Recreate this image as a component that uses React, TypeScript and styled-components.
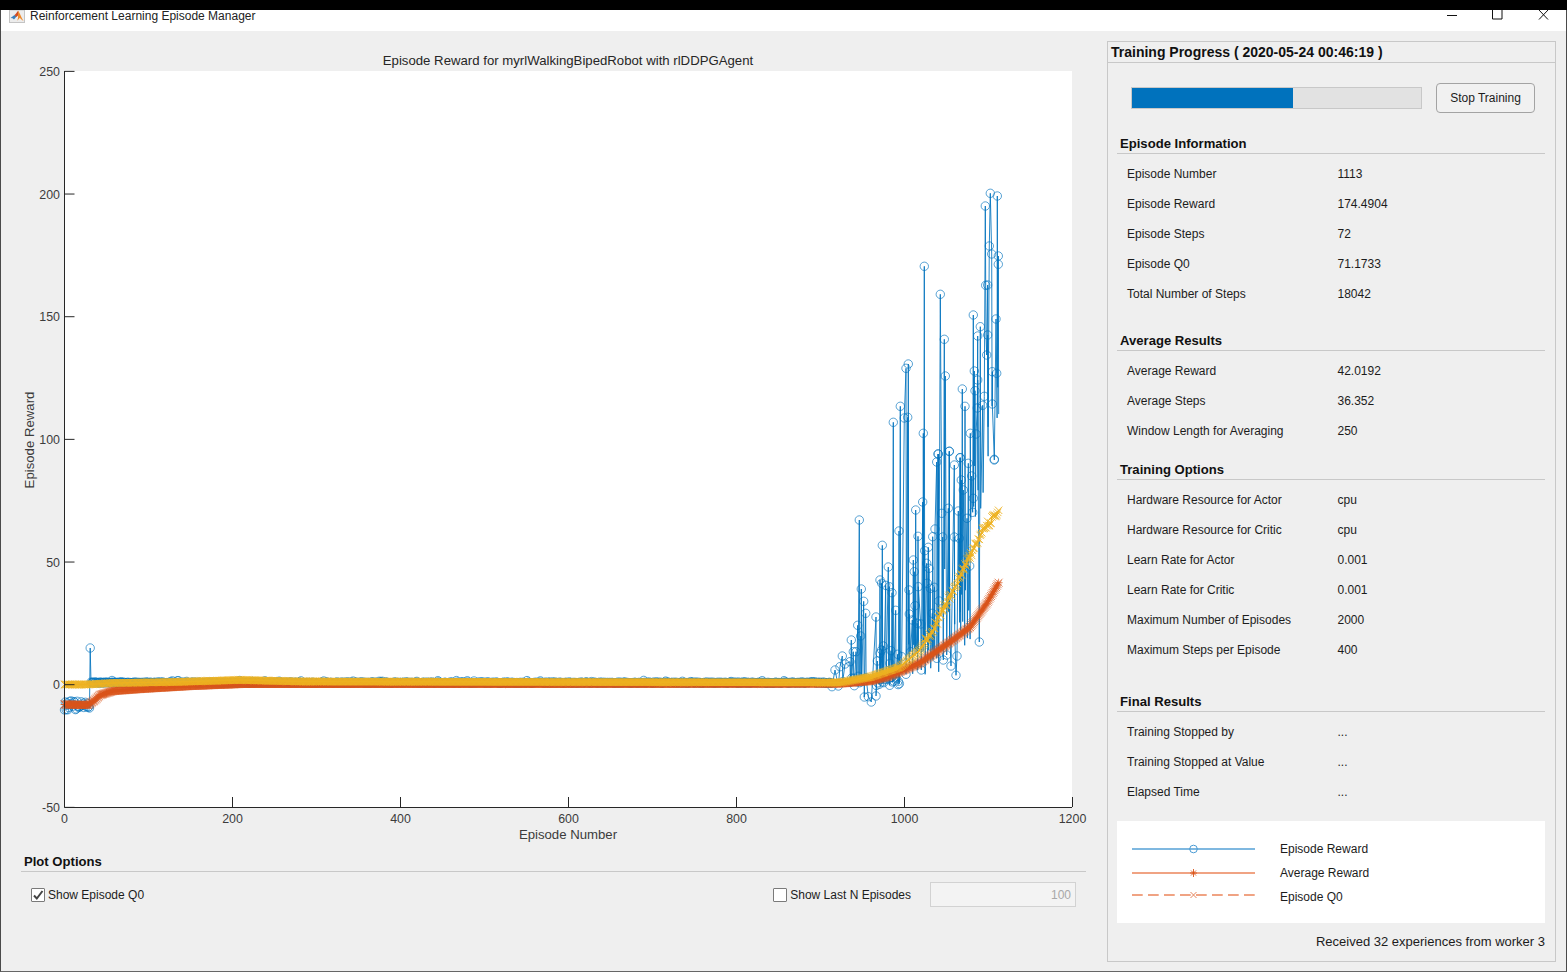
import React from 'react';
import styled, { createGlobalStyle } from 'styled-components';

// ===== Plot data (page pixel coordinates, the svg viewBox uses the same ones) =====
type Pt = [number, number];

const PX_PER_EPISODE = 0.84;
const X0 = 64.5;
const EPISODES = 1113;

let seed = 17;
const rnd = () => {
  seed = (seed * 16807) % 2147483647;
  return seed / 2147483647;
};

const upperPeaks: Pt[] = [
  [511, 40], [532, 48], [496, 78], [508, 198], [515, 222], [535, 228], [535, 253], [313, 259], [361, 343],
  [373, 478], [376, 588], [427, 627], [435, 679], [241, 679], [265, 552], [258, 565], [263, 712], [253, 714],
  [220, 727], [310, 760], [451, 760], [468, 762], [354, 822], [388, 814], [420, 833], [523, 838], [460, 405],
  [481, 440], [503, 315], [497, 316], [528, 417], [473, 468], [503, 465], [500, 525], [463, 573], [517, 575],
  [530, 580], [473, 600], [465, 632], [493, 649], [488, 676], [517, 672], [472, 684],
];
const lowerPeaks: Pt[] = [
  [523, 60], [118, 240], [187, 316], [205, 381], [180, 420], [185, 430], [197, 436], [208, 440], [216, 458],
  [124, 447], [131, 484], [137, 520], [113, 556], [122, 588], [94, 600], [67, 648], [45, 690], [168, 531],
  [227, 511], [237, 273], [287, 210], [308, 186], [294, 289], [267, 450], [280, 360], [283, 395], [295, 440],
  [285, 497], [268, 522], [277, 540], [292, 550], [302, 552], [272, 635], [304, 690], [235, 724], [350, 66],
  [355, 42], [385, 205], [415, 213], [388, 34], [421, 53], [403, 75], [445, 70], [455, 108], [424, 120],
  [430, 150], [460, 175], [458, 217], [441, 235], [345, 267], [338, 290], [368, 291], [403, 291], [418, 295],
  [314, 332], [325, 322], [320, 370], [327, 385], [322, 430], [343, 442], [331, 445], [357, 483], [337, 520],
  [365, 220], [433, 360], [449, 378], [478, 606], [411, 648], [408, 706], [393, 678], [370, 660], [350, 655],
  [380, 645], [133, 771], [154, 786], [168, 768], [145, 770], [178, 733], [172, 663], [185, 630], [190, 618],
  [213, 632], [233, 643], [245, 650], [258, 703], [210, 670], [180, 640], [100, 635], [108, 635], [60, 680],
  [75, 672], [90, 665], [36, 740], [55, 738], [103, 737],
];

const peaks: Pt[] = [
  ...upperPeaks.map(([x, y]): Pt => [820 + x / 3, 180 + y / 3]),
  ...lowerPeaks.map(([x, y]): Pt => [820 + x / 3, 440 + y / 3]),
].sort((a, b) => a[0] - b[0]);

// the spikes drop back to a floor that climbs towards the end of the run
const floorAt = (x: number) => {
  if (x >= 983) return 330 + rnd() * 130;
  if (x >= 970) return 460 + rnd() * 60;
  if (x >= 940) return 560 + rnd() * 90;
  if (x >= 900) return 640 + rnd() * 35;
  return 676 + rnd() * 10;
};

const buildReward = () => {
  const line: Pt[] = [];
  const marks: Pt[] = [];
  const add = (p: Pt) => {
    line.push(p);
    marks.push(p);
  };
  for (let ep = 0; ep < 30; ep++) add([X0 + ep * PX_PER_EPISODE, 701 + rnd() * 9]);
  add([89.5, 708]);
  add([90.2, 648]);
  for (let x = 91; x < 832; x += PX_PER_EPISODE) add([x, 682 + rnd() * 1.2 - (rnd() > 0.96 ? 1.6 : 0)]);
  peaks.forEach(([x, y]) => {
    add([x, y]);
    const low = floorAt(x);
    if (y < low - 20 && (x < 900 || rnd() > 0.3)) {
      line.push([x + 0.4, low]);
      if (x < 900) marks.push([x + 0.4, low]);
    }
  });
  return { line, marks };
};

const interpolate = (knots: Pt[]): Pt[] => {
  const pts: Pt[] = [];
  let k = 0;
  for (let ep = 0; ep < EPISODES; ep++) {
    const x = X0 + ep * PX_PER_EPISODE;
    while (k < knots.length - 2 && x > knots[k + 1][0]) k++;
    const [x1, y1] = knots[k];
    const [x2, y2] = knots[k + 1];
    pts.push([x, y1 + ((y2 - y1) * (x - x1)) / (x2 - x1)]);
  }
  return pts;
};

const averageReward = interpolate([
  [64, 704.5], [88, 705], [95, 700], [100, 695], [113, 691], [140, 689], [190, 686], [240, 684], [300, 684], [840, 683.5],
  [870, 681], [887, 677], [920, 663], [953, 640], [970, 627], [987, 603], [999, 582],
]);
const episodeQ0 = interpolate([
  [64, 684.5], [88, 684.5], [113, 683], [173, 682], [240, 680], [300, 681.5], [840, 682.5],
  [870, 677], [900, 667], [920, 650], [933, 630], [953, 590], [970, 557], [983, 530], [998, 512],
]).map(([x, y]): Pt => [x, x > 925 ? y + (rnd() - 0.5) * 6 : y]);

const linePath = (pts: Pt[]) => pts.map(([x, y], i) => `${i ? 'L' : 'M'}${x.toFixed(1)} ${y.toFixed(1)}`).join('');
const circlePath = (pts: Pt[], r: number) =>
  pts.map(([x, y]) => `M${(x - r).toFixed(1)} ${y.toFixed(1)}a${r} ${r} 0 1 0 ${2 * r} 0a${r} ${r} 0 1 0 ${-2 * r} 0`).join('');
const crossPath = (pts: Pt[], r: number) =>
  pts.map(([x, y]) => `M${(x - r).toFixed(1)} ${(y - r).toFixed(1)}l${2 * r} ${2 * r}m${-2 * r} 0l${2 * r} ${-2 * r}`).join('');
const starPath = (pts: Pt[], r: number) =>
  pts.map(([x, y]) => `${crossPath([[x, y]], r)}M${x.toFixed(1)} ${(y - r).toFixed(1)}v${2 * r}M${(x - r).toFixed(1)} ${y.toFixed(1)}h${2 * r}`).join('');

const reward = buildReward();

const xTicks = [0, 200, 400, 600, 800, 1000, 1200];
const yTicks = [250, 200, 150, 100, 50, 0, -50];
const xPos = (v: number) => X0 + v * 0.84;
const yPos = (v: number) => 684.7 - v * 2.4533;

// ===== Panel data =====
const episodeInfo = [
  ['Episode Number', '1113'],
  ['Episode Reward', '174.4904'],
  ['Episode Steps', '72'],
  ['Episode Q0', '71.1733'],
  ['Total Number of Steps', '18042'],
];
const averageResults = [
  ['Average Reward', '42.0192'],
  ['Average Steps', '36.352'],
  ['Window Length for Averaging', '250'],
];
const trainingOptions = [
  ['Hardware Resource for Actor', 'cpu'],
  ['Hardware Resource for Critic', 'cpu'],
  ['Learn Rate for Actor', '0.001'],
  ['Learn Rate for Critic', '0.001'],
  ['Maximum Number of Episodes', '2000'],
  ['Maximum Steps per Episode', '400'],
];
const finalResults = [
  ['Training Stopped by', '...'],
  ['Training Stopped at Value', '...'],
  ['Elapsed Time', '...'],
];

// ===== Styled Components =====
const GlobalStyle = createGlobalStyle`
  html, body {
    margin: 0;
    padding: 0;
    background: #000;
    overflow: hidden;
  }
  * {
    box-sizing: border-box;
  }
`;
const Window = styled.div`
  width: 1567px;
  height: 972px;
  display: flex;
  flex-direction: column;
  font-family: "Liberation Sans", Arial, sans-serif;
  font-size: 12px;
  color: #1c1c1c;
  background: #000;
`;
const TopStrip = styled.div`
  height: 10px;
  flex: none;
  background: #000;
`;
const TitleBar = styled.header`
  height: 21px;
  flex: none;
  display: flex;
  align-items: flex-start;
  background: #fff;
  border-left: 1px solid #4a4a4a;
  border-right: 1px solid #4a4a4a;
  padding-left: 8px;
  overflow: hidden;
`;
const AppIcon = styled.svg`
  width: 16px;
  height: 13px;
  flex: none;
  margin-right: 5px;
`;
const TitleText = styled.span`
  font-size: 12px;
  line-height: 12px;
  color: #222;
`;
const WindowControls = styled.div`
  margin-left: auto;
  display: flex;
  padding-right: 17px;
  gap: 35px;
`;
const ControlIcon = styled.svg`
  width: 11px;
  height: 10px;
  display: block;
`;
const Body = styled.main`
  flex: 1;
  min-height: 0;
  display: flex;
  background: #efefef;
  border-left: 1px solid #4a4a4a;
  border-right: 1px solid #4a4a4a;
  border-bottom: 1px solid #666;
`;
const LeftColumn = styled.section`
  width: 1106px;
  flex: none;
  display: flex;
  flex-direction: column;
`;
const Chart = styled.svg`
  width: 1106px;
  height: 820px;
  display: block;
  flex: none;
`;
const AxisText = styled.text`
  font-family: "Liberation Sans", Arial, sans-serif;
  font-size: 12.4px;
  fill: #3c3c3c;
`;
const ChartTitle = styled.text`
  font-family: "Liberation Sans", Arial, sans-serif;
  font-size: 13.2px;
  fill: #262626;
`;
const AxisLabel = styled.text`
  font-family: "Liberation Sans", Arial, sans-serif;
  font-size: 13.2px;
  fill: #3c3c3c;
`;
const PlotOptions = styled.div`
  margin: 0 21px 0 20px;
`;
const SectionTitle = styled.h2`
  margin: 0;
  height: 21px;
  padding-left: 3px;
  font-size: 13.1px;
  line-height: 22px;
  font-weight: 700;
  color: #111;
  border-bottom: 1px solid #c8c8c8;
`;
const OptionsRow = styled.div`
  margin: 10px 10px 0 10px;
  height: 25px;
  display: flex;
  align-items: center;
  justify-content: space-between;
`;
const CheckGroup = styled.label`
  display: flex;
  align-items: center;
  gap: 3px;
`;
const CheckBox = styled.span`
  width: 14px;
  height: 14px;
  display: flex;
  align-items: center;
  justify-content: center;
  background: #fff;
  border: 1px solid #7a7a7a;
  border-radius: 1px;
`;
const RightOptions = styled.div`
  display: flex;
  align-items: center;
  gap: 19px;
`;
const NumberBox = styled.div`
  width: 146px;
  height: 25px;
  padding-right: 4px;
  text-align: right;
  line-height: 25px;
  color: #a8a8a8;
  background: #f3f3f3;
  border: 1px solid #d2d2d2;
`;
const Panel = styled.aside`
  width: 449px;
  height: 921px;
  margin-top: 10px;
  flex: none;
  border: 1px solid #c8c8c8;
  display: flex;
  flex-direction: column;
`;
const PanelHeader = styled.h1`
  margin: 0;
  height: 21px;
  flex: none;
  padding-left: 3px;
  font-size: 14px;
  line-height: 20px;
  font-weight: 700;
  color: #111;
  border-bottom: 1px solid #c8c8c8;
`;
const PanelBody = styled.div`
  padding: 20px 10px 0 9px;
`;
const ProgressRow = styled.div`
  display: flex;
  align-items: center;
  height: 30px;
  padding-left: 14px;
  gap: 14px;
`;
const ProgressTrack = styled.div`
  width: 291px;
  height: 22px;
  background: #e2e2e2;
  border: 1px solid #c8c8c8;
`;
const ProgressFill = styled.div`
  height: 100%;
  background: #0072bd;
`;
const StopButton = styled.button`
  width: 99px;
  height: 30px;
  padding: 0;
  font: inherit;
  color: #1c1c1c;
  background: #f1f1f1;
  border: 1px solid #a3a3a3;
  border-radius: 4px;
`;
const Section = styled.section<{ $top: number }>`
  margin-top: ${props => props.$top}px;
`;
const Rows = styled.div`
  margin-top: 5px;
`;
const InfoRow = styled.div`
  display: grid;
  grid-template-columns: 210.5px 1fr;
  height: 30px;
  align-items: center;
  padding-left: 10px;
`;
const Legend = styled.div`
  margin-top: 14px;
  height: 102px;
  background: #fff;
  display: flex;
  flex-direction: column;
  padding: 16px 0 0 15px;
`;
const LegendRow = styled.div`
  height: 24px;
  display: flex;
  align-items: center;
  gap: 24px;
`;
const LegendLine = styled.svg`
  width: 124px;
  height: 14px;
  flex: none;
`;
const Status = styled.div`
  margin-top: 10px;
  text-align: right;
  line-height: 18px;
  font-size: 13px;
`;

// ===== Small parts =====
const InfoSection: React.FC<{ title: string; top: number; rows: string[][] }> = ({ title, top, rows }) => (
  <Section $top={top}>
    <SectionTitle>{title}</SectionTitle>
    <Rows>
      {rows.map(([label, value]) => (
        <InfoRow key={label}>
          <span>{label}</span>
          <span>{value}</span>
        </InfoRow>
      ))}
    </Rows>
  </Section>
);

const App: React.FC = () => {
  return (
    <Window>
      <GlobalStyle />
      <TopStrip />
      <TitleBar>
        <AppIcon viewBox="0 0 16 13">
          <rect width="16" height="13" fill="#dcdcdc" />
          <rect x="0.5" y="0" width="15" height="12.5" fill="#ececec" stroke="#c4c4c4" />
          <path d="M1.5 8 5.5 5l2 1.6L5 9.6 3.6 8.2z" fill="#3a7fbc" />
          <path d="M5.5 5c1.2-.4 2.2-2.6 3.6-4.2L10 4.6 7.4 7z" fill="#d14a20" />
          <path d="M9.1.8c1.5 1.2 3 7 5.4 10-1.6-.6-2.6-1.6-3.6-3-.8.8-1.7 2-2.7 3 .5-1.4.9-2.8.8-3.8z" fill="#ee8a2c" />
        </AppIcon>
        <TitleText>Reinforcement Learning Episode Manager</TitleText>
        <WindowControls>
          <ControlIcon viewBox="0 0 11 10">
            <path d="M1 5.5h10" stroke="#111" fill="none" />
          </ControlIcon>
          <ControlIcon viewBox="0 0 11 10">
            <path d="M.5 0v9h9.5V0" stroke="#111" fill="none" />
          </ControlIcon>
          <ControlIcon viewBox="0 0 11 10">
            <path d="M1 0l9 9.5M10 0 1 9.5" stroke="#111" fill="none" />
          </ControlIcon>
        </WindowControls>
      </TitleBar>
      <Body>
        <LeftColumn>
          <Chart viewBox="1 31 1106 820">
            <rect x="64" y="71" width="1008" height="736" fill="#fff" />
            <path d={linePath(reward.line)} fill="none" stroke="#0072bd" strokeWidth="1" strokeOpacity="0.85" />
            <path d={circlePath(reward.marks, 4.2)} fill="none" stroke="#0072bd" strokeWidth="1" strokeOpacity="0.65" />
            <path d={starPath(averageReward, 4)} fill="none" stroke="#d95319" strokeWidth="0.9" strokeOpacity="0.75" />
            <path d={linePath(averageReward)} fill="none" stroke="#d95319" strokeWidth="3" />
            <path d={crossPath(episodeQ0, 3.7)} fill="none" stroke="#edb120" strokeWidth="1" strokeOpacity="0.85" />
            <path d={linePath(episodeQ0)} fill="none" stroke="#edb120" strokeWidth="1.4" />
            <path d="M64.5 71V807.5H1072" fill="none" stroke="#262626" />
            {yTicks.map(v => (
              <g key={v}>
                <path d={`M64.5 ${yPos(v)}h10`} stroke="#262626" />
                <AxisText x="60" y={yPos(v) + 4.5} textAnchor="end">{v}</AxisText>
              </g>
            ))}
            {xTicks.map(v => (
              <g key={v}>
                <path d={`M${xPos(v)} 807v-10`} stroke="#262626" />
                <AxisText x={xPos(v)} y="823" textAnchor="middle">{v}</AxisText>
              </g>
            ))}
            <ChartTitle x="568" y="65" textAnchor="middle">Episode Reward for myrlWalkingBipedRobot with rlDDPGAgent</ChartTitle>
            <AxisLabel x="568" y="839" textAnchor="middle">Episode Number</AxisLabel>
            <AxisLabel transform="translate(34 440) rotate(-90)" textAnchor="middle">Episode Reward</AxisLabel>
          </Chart>
          <PlotOptions>
            <SectionTitle>Plot Options</SectionTitle>
            <OptionsRow>
              <CheckGroup>
                <CheckBox>
                  <svg width="12" height="12" viewBox="0 0 12 12">
                    <path d="M2 6.5 4.8 9.5 10.5 2" fill="none" stroke="#444" strokeWidth="2" />
                  </svg>
                </CheckBox>
                Show Episode Q0
              </CheckGroup>
              <RightOptions>
                <CheckGroup>
                  <CheckBox />
                  Show Last N Episodes
                </CheckGroup>
                <NumberBox>100</NumberBox>
              </RightOptions>
            </OptionsRow>
          </PlotOptions>
        </LeftColumn>
        <Panel>
          <PanelHeader>Training Progress ( 2020-05-24 00:46:19 )</PanelHeader>
          <PanelBody>
            <ProgressRow>
              <ProgressTrack>
                <ProgressFill style={{ width: `${(EPISODES / 2000) * 100 + 0.1}%` }} />
              </ProgressTrack>
              <StopButton>Stop Training</StopButton>
            </ProgressRow>
            <InfoSection title="Episode Information" top={20} rows={episodeInfo} />
            <InfoSection title="Average Results" top={21} rows={averageResults} />
            <InfoSection title="Training Options" top={13} rows={trainingOptions} />
            <InfoSection title="Final Results" top={26} rows={finalResults} />
            <Legend>
              <LegendRow>
                <LegendLine viewBox="0 0 124 14">
                  <path d="M0 7h123" stroke="#7fb8e0" strokeWidth="2" />
                  <circle cx="61.5" cy="7" r="3.8" fill="none" stroke="#4a9bd4" />
                </LegendLine>
                Episode Reward
              </LegendRow>
              <LegendRow>
                <LegendLine viewBox="0 0 124 14">
                  <path d="M0 7h123" stroke="#f0a383" strokeWidth="2" />
                  <path d="M61.5 3v8M58 7h7M59 4.5l5 5M64 4.5l-5 5" stroke="#d95319" strokeWidth="0.9" fill="none" />
                </LegendLine>
                Average Reward
              </LegendRow>
              <LegendRow>
                <LegendLine viewBox="0 0 124 14">
                  <path d="M0 5h123" stroke="#f0a383" strokeWidth="2" strokeDasharray="10.7 5.3" />
                  <path d="M58.5 2l6 6M64.5 2l-6 6" stroke="#e2764a" strokeWidth="0.9" fill="none" />
                </LegendLine>
                Episode Q0
              </LegendRow>
            </Legend>
            <Status>Received 32 experiences from worker 3</Status>
          </PanelBody>
        </Panel>
      </Body>
    </Window>
  );
};

export default App;
